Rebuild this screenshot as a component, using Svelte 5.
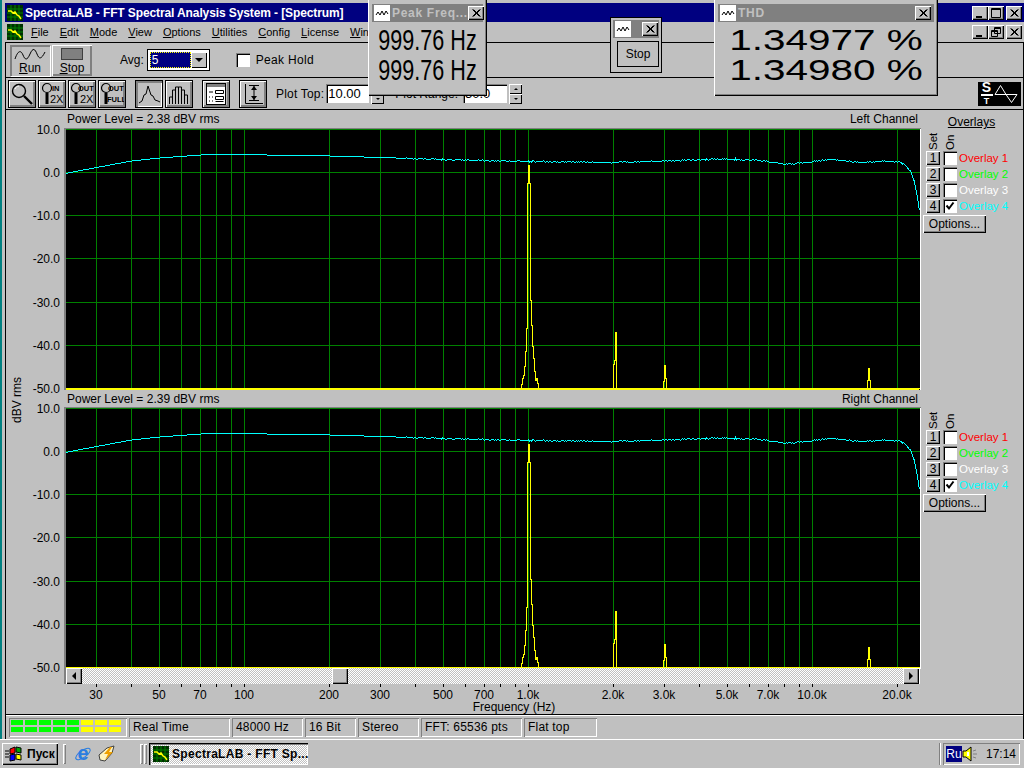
<script>
    const menu = ['File', 'Edit', 'Mode', 'View', 'Options', 'Utilities', 'Config', 'License', 'Window'];
    const overlays = [
        { n: 1, color: '#ff0000', on: false },
        { n: 2, color: '#00ff00', on: false },
        { n: 3, color: '#ffffff', on: false },
        { n: 4, color: '#00ffff', on: true }
    ];
    const status = [
        { t: 'Real Time', w: 101 },
        { t: '48000 Hz', w: 71 },
        { t: '16 Bit', w: 51 },
        { t: 'Stereo', w: 61 },
        { t: 'FFT: 65536 pts', w: 101 },
        { t: 'Flat top', w: 73 }
    ];
    const meter = ['g', 'g', 'g', 'g', 'g', 'y', 'y', 'y'];

    // log frequency axis, 284px a decade
    const fx = (f) => Math.round(244 + 284 * Math.log10(f / 100));
    const freqs = [30, 40, 50, 60, 70, 80, 90, 100, 200, 300, 400, 500, 600, 700, 800, 900, 1000, 2000, 3000, 4000, 5000, 6000, 7000, 8000, 9000, 10000, 20000];
    const gridX = freqs.map(fx);
    const freqLabels = [
        [30, '30'], [50, '50'], [70, '70'], [100, '100'], [200, '200'], [300, '300'], [500, '500'], [700, '700'],
        [1000, '1.0k'], [2000, '2.0k'], [3000, '3.0k'], [5000, '5.0k'], [7000, '7.0k'], [10000, '10.0k'], [20000, '20.0k']
    ];
    const dbLabels = ['10.0', '0.0', '-10.0', '-20.0', '-30.0', '-40.0', '-50.0'];

    // response curve as x / y pairs for the left channel
    const curve = [
        [65, 173], [80, 170], [96, 167], [131, 160.5], [159, 157.5], [200, 154.5], [225, 153.5], [244, 154], [290, 155],
        [330, 155.5], [380, 157], [443, 159], [528, 161], [614, 162], [660, 160.5], [720, 158.5], [760, 160], [785, 164],
        [805, 162], [830, 159], [860, 162], [880, 161], [896, 161], [904, 164], [910, 170], [914, 182], [917, 196], [919, 210]
    ];
    function curvePoints(dy) {
        const pts = [];
        let seg = 0;
        for (let x = 65; x <= 919; x++) {
            while (curve[seg + 1][0] < x) seg++;
            const [x0, y0] = curve[seg];
            const [x1, y1] = curve[seg + 1];
            const r = Math.sin(x * 12.9898) * 43758.5453;
            const noise = x > 400 ? (r - Math.floor(r) - 0.5) * 1.4 : 0;
            pts.push(`${x},${Math.round(y0 + ((y1 - y0) * (x - x0)) / (x1 - x0) + noise) + dy}`);
        }
        return pts.join(' ');
    }

    // peaks as x / height above the floor line
    const peak = [
        [65, 0], [521, 0], [521, 4], [522, 4], [522, 10], [523, 10], [523, 13], [524, 13], [524, 22], [525, 22], [525, 37], [526, 37],
        [526, 60], [527, 60], [527, 205], [528, 205], [528, 223], [529, 223], [529, 205], [530, 205], [530, 88], [531, 88], [531, 63],
        [532, 63], [532, 42], [533, 42], [533, 30], [534, 30], [534, 17], [535, 17], [535, 8], [536, 8], [536, 10], [537, 10], [537, 5],
        [538, 5], [538, 0], [613, 0], [613, 24], [614, 24], [614, 28], [615, 28], [615, 56], [616, 56], [616, 0], [617, 0],
        [663, 0], [663, 7], [664, 7], [664, 23], [665, 23], [665, 10], [666, 10], [666, 0],
        [867, 0], [867, 8], [868, 8], [868, 20], [869, 20], [869, 8], [870, 8], [870, 0], [919, 0]
    ];
    const peakPoints = (floor) => peak.map(([x, h]) => `${x},${floor - h}`).join(' ');
</script>

{#snippet appIcon()}
    <svg class="appicon" viewBox="0 0 16 16" width="16" height="16">
        <rect width="16" height="16" fill="#003000" />
        <path d="M0 4h16M0 8h16M0 12h16M4 0v16M8 0v16M12 0v16" stroke="#008000" />
        <path d="M1 6h3l2 2 2-1 2 3 2 1 2 3" stroke="#ffff00" fill="none" stroke-width="1.5" />
    </svg>
{/snippet}

{#snippet wave()}
    <span class="waveicon">
        <svg viewBox="0 0 16 16" width="16" height="16">
            <path d="M2 10l2-3 2 3 2-4 2 4 2-4 2 3" stroke="#000" fill="none" />
        </svg>
    </span>
{/snippet}

{#snippet close()}
    <button class="capbtn">
        <svg viewBox="0 0 14 12" width="14" height="12"><path d="M3.5 2.5l7 7M4.5 2.5l7 7M10.5 2.5l-7 7M11.5 2.5l-7 7" stroke="#000" /></svg>
    </button>
{/snippet}

{#snippet plot(top, zero, floor, height)}
    <svg class="plot" viewBox="6 {top - 1} 914 {height}" width="914" height={height}>
        <rect x="64" y={top - 1} width="857" height={height} fill="#808080" />
        <rect x="66" y={top} width="855" height={floor - top + 2} fill="#ffffff" />
        <rect x="66" y={top} width="854" height={floor - top + 2} fill="#000000" />
        {#each gridX as x}
            <line x1={x + 0.5} x2={x + 0.5} y1={top} y2={floor} stroke="#008000" />
        {/each}
        {#each dbLabels as _, i}
            <line x1="66" x2="920" y1={Math.round(zero + (i - 1) * 43.2) + 0.5} y2={Math.round(zero + (i - 1) * 43.2) + 0.5} stroke="#008000" />
        {/each}
        <polyline points={peakPoints(floor)} fill="none" stroke="#ffff00" shape-rendering="crispEdges" transform="translate(0.5 0.5)" />
        <rect x="66" y={floor} width="853" height="2" fill="#ffff00" />
        <polyline points={curvePoints(zero - 172)} fill="none" stroke="#00ffff" shape-rendering="crispEdges" transform="translate(0.5 0.5)" />
        {#each dbLabels as label, i}
            <text x="60" y={zero + (i - 1) * 43.2 + 5} text-anchor="end">{label}</text>
        {/each}
    </svg>
{/snippet}

{#snippet overlayBlock()}
    <div class="ov-head">
        <span class="vert">Set</span>
        <span class="vert">On</span>
    </div>
    {#each overlays as o}
        <div class="ov-row">
            <button class="setbtn">{o.n}</button>
            <span class="check small">
                {#if o.on}
                    <svg viewBox="0 0 12 12" width="12" height="12"><path d="M2.5 5.5l2.5 3 4.5-6" fill="none" stroke="#000" stroke-width="2" /></svg>
                {/if}
            </span>
            <span style="color: {o.color}">Overlay {o.n}</span>
        </div>
    {/each}
    <button class="options">Options...</button>
{/snippet}

<div class="screen">
    <div class="app">
        <div class="titlebar">
            {@render appIcon()}
            <span class="title">SpectraLAB - FFT Spectral Analysis System - [Spectrum]</span>
            <div class="caps">
                <button class="capbtn"><svg viewBox="0 0 14 12" width="14" height="12"><path d="M3 9.5h6M3 10.5h6" stroke="#000" /></svg></button>
                <button class="capbtn"><svg viewBox="0 0 14 12" width="14" height="12"><path d="M2.5 1.5h9v9h-9zM2.5 2.5h9" fill="none" stroke="#000" /></svg></button>
                <button class="capbtn gap"><svg viewBox="0 0 14 12" width="14" height="12"><path d="M3.5 2.5l7 7M4.5 2.5l7 7M10.5 2.5l-7 7M11.5 2.5l-7 7" stroke="#000" /></svg></button>
            </div>
        </div>

        <div class="menubar">
            {@render appIcon()}
            <div class="menus">
                {#each menu as m}
                    <span><u>{m[0]}</u>{m.slice(1)}</span>
                {/each}
            </div>
            <div class="caps">
                <button class="capbtn"><svg viewBox="0 0 14 12" width="14" height="12"><path d="M3 9.5h6M3 10.5h6" stroke="#000" /></svg></button>
                <button class="capbtn"><svg viewBox="0 0 14 12" width="14" height="12"><path d="M5.5 1.5h6v6h-6zM5.5 2.5h6M2.5 4.5h6v6h-6zM2.5 5.5h6" fill="#c0c0c0" stroke="#000" /></svg></button>
                <button class="capbtn gap"><svg viewBox="0 0 14 12" width="14" height="12"><path d="M3.5 2.5l7 7M4.5 2.5l7 7M10.5 2.5l-7 7M11.5 2.5l-7 7" stroke="#000" /></svg></button>
            </div>
        </div>

        <div class="mdi">
            <div class="toolbar one">
                <button class="bigbtn down">
                    <svg viewBox="0 0 32 14" width="32" height="14"><path d="M1 11C4 2 7 2 9 7s4 6 7-1 5-5 7 0 4 6 8-2" fill="none" stroke="#000" /></svg>
                    <span><u>R</u>un</span>
                </button>
                <button class="bigbtn">
                    <span class="stopicon"></span>
                    <span><u>S</u>top</span>
                </button>
                <span class="avg">Avg:</span>
                <div class="combo">
                    <span class="combo-val"><span>5</span></span>
                    <span class="combo-arrow"><i></i></span>
                </div>
                <span class="check peakcheck"></span>
                <span class="peaklabel">Peak Hold</span>
            </div>

            <div class="toolbar two">
                <button class="tool">
                    <svg viewBox="0 0 24 24" width="24" height="24"><circle cx="9" cy="9" r="6.5" fill="#c0c0c0" stroke="#000" stroke-width="1.4" /><path d="M5 7c1-2 2-3 4-3" stroke="#fff" fill="none" /><path d="M14 14l8 8" stroke="#000" stroke-width="2.4" /></svg>
                </button>
                <button class="tool">
                    <svg viewBox="0 0 24 24" width="24" height="24"><circle cx="7" cy="6" r="4.5" fill="none" stroke="#000" stroke-width="1.2" /><path d="M7 11v11" stroke="#000" stroke-width="3" /><text class="ti" x="12" y="9">IN</text><text class="tx" x="10" y="21">2X</text></svg>
                </button>
                <button class="tool">
                    <svg viewBox="0 0 24 24" width="24" height="24"><circle cx="6" cy="6" r="4.5" fill="none" stroke="#000" stroke-width="1.2" /><path d="M6 11v11" stroke="#000" stroke-width="3" /><text class="ti" x="8" y="9">OUT</text><text class="tx" x="10" y="21">2X</text></svg>
                </button>
                <button class="tool">
                    <svg viewBox="0 0 24 24" width="24" height="24"><circle cx="6" cy="6" r="4.5" fill="none" stroke="#000" stroke-width="1.2" /><path d="M6 11v11" stroke="#000" stroke-width="3" /><text class="ti" x="8" y="9">OUT</text><text class="ti" x="7" y="20">FULL</text></svg>
                </button>
                <button class="tool down sp">
                    <svg viewBox="0 0 24 24" width="24" height="24"><path d="M2 21l3-2 2-6 2-1 2-8 3 9 2 1 2 4 3 1 2 1" fill="none" stroke="#000" /></svg>
                </button>
                <button class="tool">
                    <svg viewBox="0 0 24 24" width="24" height="24"><path d="M2.5 22v-7h3v7M5.5 22V8h3v14M8.5 22V5h3v17M11.5 22V5h3v17M14.5 22V8h3v14M17.5 22v-9h3v9" fill="none" stroke="#000" /></svg>
                </button>
                <button class="tool sp2">
                    <svg viewBox="0 0 24 24" width="24" height="24"><rect x="2.5" y="1.5" width="19" height="21" fill="#fff" stroke="#000" /><rect x="3" y="2" width="18" height="3" fill="#808080" /><path d="M11.5 8.5h8v3h-8zM11.5 14.5h8v3h-8zM11.5 19.5h8M5 10h4M5 15h1M8 15h1M5 19h1M8 19h1" fill="none" stroke="#000" /></svg>
                </button>
                <button class="tool sp2">
                    <svg viewBox="0 0 24 24" width="24" height="24"><path d="M4.5 2v19.5H22" fill="none" stroke="#000" /><path d="M8 3.5h10M8 18.5h10M13 4v14" stroke="#000" /><path d="M10 8l3-4 3 4zM10 14l3 4 3-4z" fill="#000" /></svg>
                </button>
                <label class="fld first" for="plot-top">Plot Top:</label>
                <input id="plot-top" class="num top" value="10.00" />
                <span class="spin"><span><i></i></span><span><i class="dn"></i></span></span>
                <label class="fld" for="plot-range">Plot Range:</label>
                <input id="plot-range" class="num range" value="30.0" />
                <span class="spin"><span><i></i></span><span><i class="dn"></i></span></span>
                <div class="logo">
                    <span class="logo-st"><b>S</b><i></i><b class="t">T</b></span>
                    <svg viewBox="0 0 24 20" width="24" height="20"><path d="M1 10.5h22M1 10.5L6.5 1.5 12 10.5 17.5 18.5 23 10.5" fill="none" stroke="#fff" /></svg>
                </div>
            </div>

            <div class="main">
                <div class="plots">
                    <div class="chan-head"><span>Power Level = 2.38 dBV rms</span><span>Left Channel</span></div>
                    {@render plot(129, 172, 388, 262)}
                    <div class="chan-head second"><span>Power Level = 2.39 dBV rms</span><span>Right Channel</span></div>
                    {@render plot(408, 451, 667, 261)}
                    <div class="scroll">
                        <span class="sbtn"><i class="lf"></i></span>
                        <span class="thumb"></span>
                        <span class="sbtn right"><i class="rt"></i></span>
                    </div>
                    <svg class="axis" viewBox="6 684 914 30" width="914" height="30">
                        {#each gridX as x}
                            <line x1={x + 0.5} x2={x + 0.5} y1="684" y2="687" stroke="#000" />
                        {/each}
                        {#each freqLabels as [f, label]}
                            <text x={fx(f)} y="699" text-anchor="middle">{label}</text>
                        {/each}
                        <text x="514" y="711" text-anchor="middle">Frequency (Hz)</text>
                    </svg>
                    <span class="ylabel">dBV rms</span>
                </div>
                <div class="side">
                    <div class="ov-title">Overlays</div>
                    {@render overlayBlock()}
                    <div class="ov-second">
                        {@render overlayBlock()}
                    </div>
                </div>
            </div>

            <div class="statusbar">
                <div class="cell meter">
                    {#each meter as c}
                        <span class="bar {c}"><i></i><i></i></span>
                    {/each}
                </div>
                {#each status as s}
                    <div class="cell" style="width: {s.w}px">{s.t}</div>
                {/each}
            </div>
        </div>
    </div>

    <div class="taskbar">
        <button class="start">
            <svg viewBox="0 0 20 16" width="20" height="16">
                <path d="M0 5h4M0 8h4M0 11h4" stroke="#000" />
                <path d="M5 3l5-2v6l-5 1z" fill="#ff0000" stroke="#000" />
                <path d="M11 1l5 1v5l-5-1z" fill="#00a000" stroke="#000" />
                <path d="M5 9l5-1v6l-5 1z" fill="#0000ff" stroke="#000" />
                <path d="M11 8l5 1v5l-5-1z" fill="#ffff00" stroke="#000" />
            </svg>
            <span>Пуск</span>
        </button>
        <span class="grip"></span>
        <svg class="ie" viewBox="0 0 18 18" width="18" height="18">
            <ellipse cx="9" cy="9" rx="8.5" ry="3.5" transform="rotate(-35 9 9)" fill="none" stroke="#2a7de0" />
            <text class="ie-e" x="9" y="15" text-anchor="middle">e</text>
        </svg>
        <svg class="amp" viewBox="0 0 18 18" width="18" height="18">
            <path d="M1 10L9 3l7-2-2 7-7 8-5-1z" fill="#fff4c0" stroke="#404040" />
            <path d="M12 2L6 9h4l-3 6 8-8h-4l3-5z" fill="#f0a000" />
        </svg>
        <span class="grip far"></span>
        <span class="grip near"></span>
        <button class="task">
            {@render appIcon()}
            <span>SpectraLAB - FFT Sp...</span>
        </button>
        <span class="tray-sep"></span>
        <div class="tray">
            <span class="lang">Ru</span>
            <svg viewBox="0 0 16 16" width="16" height="16"><path d="M1 5h3l5-4v14l-5-4H1z" fill="#ffff00" stroke="#000" /><path d="M5 6h2v4H5z" fill="#fff" /><path d="M11 5l3-1M11 8h4M11 11l3 1" stroke="#808080" /></svg>
            <span class="clock">17:14</span>
        </div>
    </div>

    <!-- floating readouts sit over the main window -->
    <div class="float peakwin">
        <div class="cap">
            {@render wave()}
            <span>Peak Freq...</span>
            {@render close()}
        </div>
        <div class="big narrow"><span>999.76 Hz</span></div>
        <div class="big narrow"><span>999.76 Hz</span></div>
    </div>

    <div class="float stopwin">
        <div class="cap small">
            {@render wave()}
            {@render close()}
        </div>
        <button class="stopbtn">Stop</button>
    </div>

    <div class="float thdwin">
        <div class="cap">
            {@render wave()}
            <span>THD</span>
            {@render close()}
        </div>
        <div class="big wide"><span>1.34977 %</span></div>
        <div class="big wide"><span>1.34980 %</span></div>
    </div>
</div>

<style>
    :global(body) {
        background: #c0c0c0;
    }
    .screen {
        position: relative;
        width: 1024px;
        height: 768px;
        overflow: hidden;
        background: #c0c0c0;
        font-family: 'Liberation Sans', Arial, sans-serif;
        font-size: 12px;
        color: #000;
    }
    button {
        font: inherit;
        color: inherit;
        padding: 0;
        margin: 0;
        border: none;
        background: #c0c0c0;
    }
    svg {
        display: block;
        flex-shrink: 0;
    }
    .app {
        height: 740px;
        box-sizing: border-box;
        padding-top: 3px;
        padding-left: 3px;
        border-top: 1px solid #fff;
        border-left: 2px solid #008080;
        margin-top: -1px;
    }
    .titlebar {
        height: 19px;
        background: #000080;
        display: flex;
        align-items: center;
        padding-left: 2px;
        padding-right: 2px;
    }
    .title {
        color: #fff;
        font-weight: bold;
        font-size: 12px;
        letter-spacing: -0.11px;
        margin-left: 2px;
        white-space: nowrap;
    }
    .caps {
        margin-left: auto;
        display: flex;
    }
    .capbtn {
        width: 16px;
        height: 14px;
        display: block;
        box-shadow: inset 1px 1px #fff, inset -1px -1px #000, inset -2px -2px #808080;
    }
    .capbtn svg {
        margin: 1px;
    }
    .capbtn.gap {
        margin-left: 2px;
    }
    .menubar {
        height: 20px;
        display: flex;
        align-items: center;
        padding-left: 2px;
        padding-right: 2px;
    }
    .menus {
        display: flex;
        gap: 11px;
        margin-left: 8px;
        font-size: 11px;
    }
    .mdi {
        height: 698px;
        box-sizing: border-box;
        border: 1px solid #000;
        display: flex;
        flex-direction: column;
    }
    .toolbar {
        display: flex;
        align-items: center;
        box-sizing: border-box;
    }
    .toolbar.one {
        height: 35px;
        padding-left: 4px;
        border-bottom: 1px solid #000;
    }
    .toolbar.two {
        height: 32px;
        padding-left: 2px;
        border-bottom: 1px solid #000;
        gap: 2px;
    }
    .bigbtn {
        width: 40px;
        height: 31px;
        margin-right: 2px;
        display: flex;
        flex-direction: column;
        align-items: center;
        line-height: 12px;
        padding-top: 3px;
        box-sizing: border-box;
        box-shadow: inset 1px 1px #fff, inset -1px -1px #808080, inset -2px -2px #808080;
    }
    .bigbtn.down {
        box-shadow: inset 2px 2px #808080, 1px 1px #fff;
    }
    .stopicon {
        width: 20px;
        height: 10px;
        background: #808080;
        border: 1px solid #404040;
        margin-bottom: 2px;
    }
    .avg {
        margin-left: 26px;
    }
    .combo {
        margin-left: 3px;
        width: 63px;
        height: 22px;
        box-sizing: border-box;
        background: #fff;
        border: 1px solid #000;
        padding: 2px;
        display: flex;
    }
    .combo-val {
        flex: 1;
        background: #000080;
        color: #fff;
        border: 1px dotted #ffff00;
        line-height: 14px;
        padding-left: 1px;
    }
    .combo-arrow {
        width: 16px;
        display: flex;
        align-items: center;
        justify-content: center;
        background: #c0c0c0;
        box-shadow: inset 1px 1px #fff, inset -1px -1px #000;
    }
    .combo-arrow i {
        border-left: 4px solid transparent;
        border-right: 4px solid transparent;
        border-top: 4px solid #000;
    }
    .check {
        width: 14px;
        height: 14px;
        background: #fff;
        box-sizing: border-box;
        display: block;
        box-shadow: inset 1px 1px #808080, inset 2px 2px #000;
        flex-shrink: 0;
        padding: 1px;
    }
    .peakcheck {
        margin-left: 26px;
    }
    .peaklabel {
        margin-left: 6px;
        letter-spacing: 0.3px;
    }
    .tool {
        width: 28px;
        height: 28px;
        box-sizing: border-box;
        border: 1px solid #000;
        display: flex;
        align-items: center;
        justify-content: center;
        box-shadow: inset 1px 1px #fff, inset -2px -2px #808080;
        overflow: hidden;
    }
    .tool.down {
        box-shadow: inset 2px 2px #808080, inset -1px -1px #fff;
    }
    .tool.sp {
        margin-left: 7px;
    }
    .tool.sp2 {
        margin-left: 7px;
    }
    .ti {
        font-size: 7.5px;
        font-weight: bold;
    }
    .tx {
        font-size: 11px;
    }
    .fld {
        margin-left: 9px;
        white-space: nowrap;
    }
    .fld.first {
        margin-left: 7px;
        letter-spacing: 0.2px;
    }
    .num {
        font: inherit;
        font-size: 13px;
        height: 19px;
        box-sizing: border-box;
        border: none;
        padding: 0 0 0 2px;
        margin: 0;
        background: #fff;
        box-shadow: inset 1px 1px #808080, inset 2px 2px #000;
        outline: none;
    }
    .num.top {
        width: 43px;
    }
    .num.range {
        width: 44px;
        margin-left: 3px;
    }
    .spin {
        width: 13px;
        display: flex;
        flex-direction: column;
    }
    .spin span {
        height: 10px;
        display: flex;
        align-items: center;
        justify-content: center;
        box-shadow: inset 1px 1px #fff, inset -1px -1px #000;
    }
    .spin i {
        border-left: 2px solid transparent;
        border-right: 2px solid transparent;
        border-bottom: 2px solid #000;
    }
    .spin i.dn {
        border-bottom: none;
        border-top: 2px solid #000;
    }
    .logo {
        margin-left: auto;
        margin-right: 2px;
        width: 43px;
        height: 24px;
        background: #000;
        color: #fff;
        display: flex;
        align-items: center;
        gap: 1px;
        padding-left: 2px;
        box-sizing: border-box;
    }
    .logo-st {
        width: 13px;
        display: flex;
        flex-direction: column;
        align-items: center;
        flex-shrink: 0;
    }
    .logo-st b {
        font-size: 14px;
        line-height: 11px;
    }
    .logo-st b.t {
        font-size: 9px;
        line-height: 8px;
    }
    .logo-st i {
        width: 12px;
        height: 2px;
        background: #fff;
        margin: 1px 0;
    }
    .main {
        flex: 1;
        display: flex;
        min-height: 0;
    }
    .plots {
        position: relative;
        width: 914px;
        flex-shrink: 0;
    }
    .chan-head {
        height: 18px;
        display: flex;
        justify-content: space-between;
        align-items: center;
        padding: 0 2px 0 61px;
        box-sizing: border-box;
    }
    .chan-head.second {
        height: 17px;
    }
    .plot {
        overflow: visible;
    }
    svg text {
        font-family: 'Liberation Sans', Arial, sans-serif;
    }
    .plot text,
    .axis text {
        font-size: 12px;
    }
    .ie-e {
        font-size: 20px;
        font-weight: bold;
        fill: #2a7de0;
    }
    .scroll {
        height: 16px;
        margin-left: 58px;
        border-left: 2px solid #808080;
        border-right: 1px solid #fff;
        display: flex;
        position: relative;
        background-color: #fff;
        background-image: conic-gradient(#c0c0c0 25%, #fff 0 50%, #c0c0c0 0 75%, #fff 0);
        background-size: 2px 2px;
    }
    .sbtn,
    .thumb {
        width: 16px;
        height: 16px;
        background: #c0c0c0;
        display: flex;
        align-items: center;
        justify-content: center;
        box-shadow: inset 1px 1px #fff, inset -1px -1px #000, inset -2px -2px #808080;
    }
    .thumb {
        margin-left: 250px;
    }
    .sbtn.right {
        margin-left: auto;
    }
    .sbtn i.lf {
        border-top: 4px solid transparent;
        border-bottom: 4px solid transparent;
        border-right: 4px solid #000;
    }
    .sbtn i.rt {
        border-top: 4px solid transparent;
        border-bottom: 4px solid transparent;
        border-left: 4px solid #000;
    }
    .axis {
        overflow: visible;
    }
    .ylabel {
        position: absolute;
        left: 4px;
        top: 267px;
        writing-mode: vertical-rl;
        transform: rotate(180deg);
        white-space: nowrap;
    }
    .side {
        flex: 1;
        padding-top: 5px;
        box-sizing: border-box;
    }
    .ov-title {
        text-decoration: underline;
        line-height: 14px;
        text-align: center;
        width: 103px;
    }
    .ov-head {
        height: 19px;
        display: flex;
        padding-left: 6px;
        gap: 3px;
        margin-top: 2px;
    }
    .vert {
        width: 14px;
        writing-mode: vertical-rl;
        transform: rotate(180deg);
        text-align: left;
        line-height: 14px;
        font-size: 11.5px;
    }
    .ov-row {
        height: 16px;
        display: flex;
        align-items: center;
        padding-left: 6px;
        gap: 3px;
        white-space: nowrap;
        font-size: 11.5px;
    }
    .ov-row .check {
        margin-right: -1px;
    }
    .setbtn {
        width: 14px;
        height: 14px;
        line-height: 12px;
        font-size: 12px;
        box-shadow: inset 1px 1px #fff, inset -1px -1px #000, inset -2px -2px #808080;
    }
    .options {
        display: block;
        margin: 1px 0 0 3px;
        width: 63px;
        height: 18px;
        box-shadow: inset 1px 1px #fff, inset -1px -1px #000, inset -2px -2px #808080;
    }
    .ov-second {
        margin-top: 177px;
    }
    .statusbar {
        height: 25px;
        flex-shrink: 0;
        box-sizing: border-box;
        border-top: 1px solid #000;
        box-shadow: inset 0 1px #fff;
        display: flex;
        align-items: flex-start;
        gap: 2px;
        padding: 3px 0 0 3px;
    }
    .cell {
        height: 19px;
        box-sizing: border-box;
        line-height: 18px;
        padding-left: 4px;
        box-shadow: inset 1px 1px #808080, inset -1px -1px #fff;
        white-space: nowrap;
        letter-spacing: 0.2px;
    }
    .meter {
        width: 118px;
        display: flex;
        gap: 2px;
        padding: 2px 0 0 2px;
    }
    .bar {
        width: 12px;
        display: flex;
        flex-direction: column;
        gap: 2px;
    }
    .bar i {
        display: block;
        height: 5px;
    }
    .bar.g i {
        background: #00ff00;
    }
    .bar.y i {
        background: #ffff00;
    }
    .taskbar {
        height: 28px;
        box-sizing: border-box;
        box-shadow: inset 0 1px #fff;
        display: flex;
        align-items: center;
        padding: 2px 4px 0 2px;
    }
    .start {
        width: 56px;
        height: 22px;
        display: flex;
        align-items: center;
        gap: 2px;
        padding-left: 3px;
        box-sizing: border-box;
        font-weight: bold;
        box-shadow: inset 1px 1px #fff, inset -1px -1px #000, inset -2px -2px #808080;
    }
    .grip {
        width: 3px;
        height: 20px;
        margin-left: 5px;
        box-shadow: inset 1px 1px #fff, inset -1px -1px #808080;
    }
    .grip.far {
        margin-left: 24px;
    }
    .grip.near {
        margin-left: 1px;
    }
    .ie {
        margin-left: 8px;
    }
    .amp {
        margin-left: 6px;
    }
    .task {
        margin-left: 2px;
        width: 159px;
        height: 22px;
        display: flex;
        align-items: center;
        gap: 3px;
        padding-left: 4px;
        box-sizing: border-box;
        font-weight: bold;
        letter-spacing: 0.3px;
        white-space: nowrap;
        background-color: #fff;
        background-image: conic-gradient(#c0c0c0 25%, #fff 0 50%, #c0c0c0 0 75%, #fff 0);
        background-size: 2px 2px;
        box-shadow: inset 1px 1px #000, inset 2px 2px #808080, inset -1px -1px #fff;
    }
    .tray-sep {
        width: 2px;
        height: 22px;
        margin-left: auto;
        box-shadow: inset 1px 0 #808080, inset -1px 0 #fff;
    }
    .tray {
        margin-left: 2px;
        width: 77px;
        height: 22px;
        box-sizing: border-box;
        display: flex;
        align-items: center;
        padding-left: 3px;
        box-shadow: inset 1px 1px #808080, inset -1px -1px #fff;
    }
    .lang {
        background: #000080;
        color: #fff;
        width: 16px;
        height: 16px;
        line-height: 16px;
        text-align: center;
        font-size: 12px;
    }
    .clock {
        margin-left: 8px;
    }
    .float {
        position: absolute;
        background: #c0c0c0;
        box-sizing: border-box;
        box-shadow: inset 1px 1px #fff, inset -1px -1px #000, inset -2px -2px #808080;
    }
    .peakwin {
        left: 368px;
        top: -1px;
        width: 119px;
        height: 97px;
        padding: 5px 4px 0 4px;
    }
    .thdwin {
        left: 714px;
        top: -1px;
        width: 224px;
        height: 97px;
        padding: 5px 4px 0 4px;
    }
    .stopwin {
        left: 610px;
        top: 17px;
        width: 52px;
        height: 56px;
        padding: 2px;
        border: 1px solid #000;
        box-shadow: none;
    }
    .cap {
        height: 18px;
        background: #808080;
        display: flex;
        align-items: center;
        color: #c0c0c0;
        font-weight: bold;
        letter-spacing: 0.7px;
        padding: 0 3px 0 2px;
        white-space: nowrap;
    }
    .cap.small {
        padding-right: 1px;
    }
    .cap span:not(.waveicon) {
        margin-left: 2px;
    }
    .cap .capbtn {
        margin-left: auto;
    }
    .waveicon {
        width: 16px;
        height: 16px;
        background: #fff;
        flex-shrink: 0;
        display: block;
    }
    .big {
        font-size: 30px;
        line-height: 29.5px;
        display: flex;
        justify-content: center;
        white-space: nowrap;
    }
    .cap + .big {
        margin-top: 3px;
    }
    .narrow {
        transform: scaleX(0.72);
    }
    .wide {
        transform: scaleX(1.35);
    }
    .stopbtn {
        display: block;
        margin: 3px 0 0 4px;
        width: 42px;
        height: 26px;
        box-shadow: inset 1px 1px #fff, inset -1px -1px #000, inset 0 0 0 2px #c0c0c0, inset -2px -2px #808080;
        outline: 1px solid #000;
        outline-offset: -1px;
    }
</style>
